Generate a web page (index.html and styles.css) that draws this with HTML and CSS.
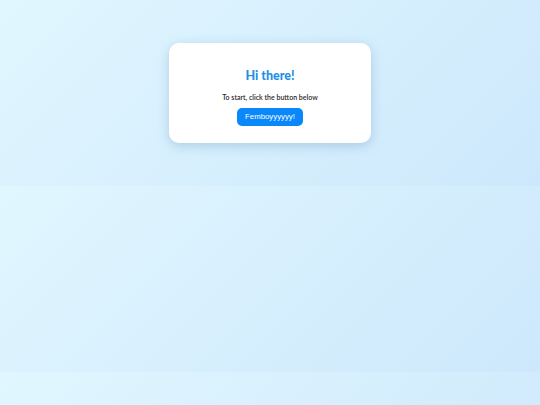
FILE: index.html
```html
<!DOCTYPE html>
<html>
<head>
<meta charset="utf-8">
<link rel="stylesheet" href="styles.css">
</head>
<body>
  <main class="card">
    <h1 class="title">Hi there!</h1>
    <p class="lead">To start, click the button below</p>
    <button class="btn">Femboyyyyyy!</button>
  </main>
</body>
</html>
```
FILE: styles.css
```css
html {
  margin: 0;
}
body {
  margin: 0;
  padding: 43px 0 42.5px;
  background: linear-gradient(135deg, #e1f7ff 0%, #cde8fc 100%);
  font-family: Lato, "Open Sans", sans-serif;
  display: flex;
  justify-content: center;
}
.card {
  width: 202px;
  box-sizing: border-box;
  padding: 25px 16px 17px;
  background: #ffffff;
  border-radius: 10px;
  box-shadow: 0 3px 12px rgba(100, 150, 190, 0.38);
  text-align: center;
  display: flex;
  flex-direction: column;
  align-items: center;
}
.title {
  margin: 0;
  font-size: 12.5px;
  line-height: 16px;
  font-weight: 900;
  color: #1f90e5;
}
.lead {
  margin: 8px 0 6px;
  font-size: 7px;
  line-height: 10px;
  font-weight: 600;
  color: #2a2a2a;
}
.btn {
  height: 18px;
  width: 66px;
  padding: 0;
  border: none;
  border-radius: 5px;
  background: #0a88fb;
  color: #ffffff;
  font-family: "Liberation Sans", Arial, sans-serif;
  font-size: 7.8px;
  font-weight: 400;
  line-height: 18px;
}
```
